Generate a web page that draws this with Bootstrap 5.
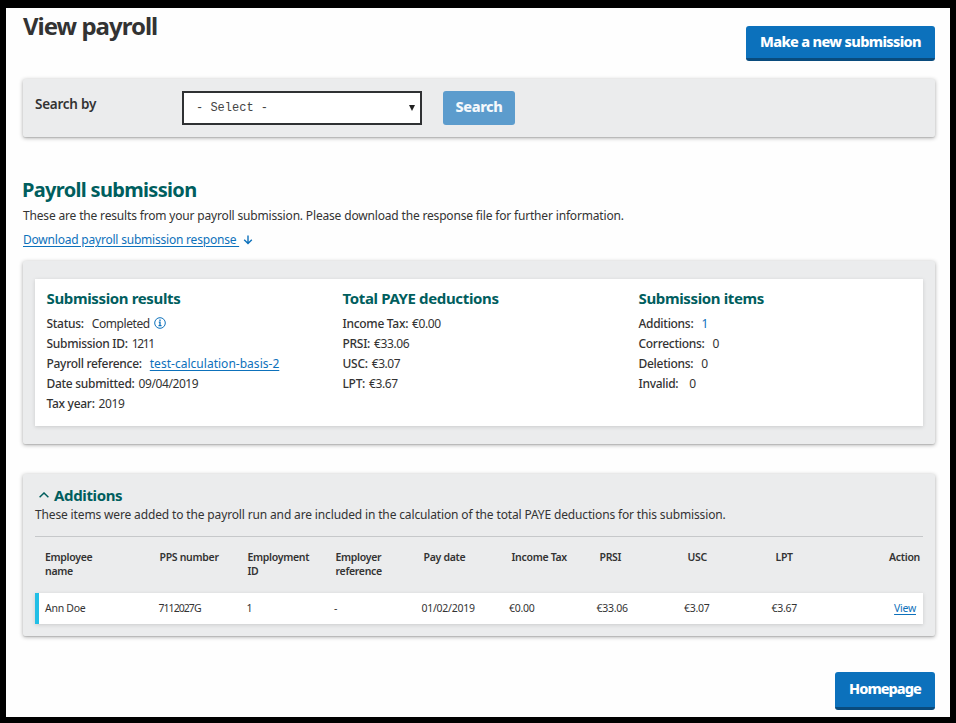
<!DOCTYPE html>
<html lang="en">
<head>
<meta charset="utf-8">
<meta name="viewport" content="width=device-width, initial-scale=1">
<title>View payroll</title>
<link rel="stylesheet" href="https://cdn.jsdelivr.net/npm/bootstrap@5.3.0/dist/css/bootstrap.min.css">
<style>
:root { --ink: #333; --teal: #005e5e; --link: #0d71bb; --grey: #ebeced; }
body { font: 12px/20px "Noto Sans", "Open Sans", sans-serif; letter-spacing: -.17px; color: var(--ink); background: #000; }
.page { height: 723px; border: solid #000; border-width: 8px 6px 6px; padding: 0 15px 0 17px; background: #fefefe; overflow: hidden; }
.page > * { flex: none; }
h1, h2, h3, p { margin: 0; }
h1 { font-size: 24px; line-height: 30px; font-weight: 700; letter-spacing: -1px; padding-top: 3px; }
h2 { font-size: 20px; line-height: 24px; font-weight: 700; letter-spacing: -.68px; color: var(--teal); margin: 41px 0 0 -1px; }
h3 { font-size: 15px; line-height: 22px; font-weight: 700; letter-spacing: -.36px; color: var(--teal); }
a { color: var(--link); text-underline-offset: 2px; }
.topline { height: 71px; }
.action-btn { --bs-btn-font-size: 14.5px; --bs-btn-font-weight: 800; --bs-btn-line-height: 30px; --bs-btn-padding-x: 0; --bs-btn-padding-y: 0;
  --bs-btn-bg: #0c71bc; --bs-btn-color: #fff; --bs-btn-border-width: 0; --bs-btn-border-radius: 3px; --bs-btn-hover-bg: #095e9e; --bs-btn-hover-color: #fff;
  letter-spacing: -.66px; padding-bottom: 2px; border-bottom: 3px solid #094b7d; white-space: nowrap; }
.btn-new { width: 189px; margin-top: 18px; }
.btn-home { width: 100px; --bs-btn-line-height: 32px; padding-bottom: 3px; letter-spacing: -.95px; }
.btn-find { width: 72px; height: 34px; --bs-btn-line-height: 28px; border: 0; padding-bottom: 5px; letter-spacing: -.4px; }
.btn-find:disabled { background: #5c9ccd; color: #f4f8fb; opacity: 1; }
.panel { background: var(--grey); border-radius: 2px; box-shadow: 0 1px 4px rgba(0,0,0,.33), 0 1px 1px rgba(0,0,0,.1); padding: 0 12px; }
.search-panel { height: 58px; padding-top: 12px; }
.search-label { width: 147px; font-size: 13.5px; line-height: 27px; font-weight: 600; letter-spacing: -.25px; }
.search-select { width: 240px; height: 34px; border: 2px solid #2f3133; border-radius: 0; padding: 0 0 0 12px; margin-right: 21px; color: #444;
  font: 12px/30px "Liberation Mono", monospace; letter-spacing: 0;
  background: #fff url("data:image/svg+xml,%3Csvg xmlns='http://www.w3.org/2000/svg' viewBox='0 0 6 6'%3E%3Cpath d='M0 0h6L3 6z' fill='%23222'/%3E%3C/svg%3E") no-repeat right 5px center / 6px 6px; }
.intro { margin-top: 4px; }
.download { gap: 4px; margin-top: 4px; letter-spacing: -.21px; }
.results { height: 183px; margin-top: 11px; padding-top: 18px; }
.sheet { background: #fff; box-shadow: 0 1px 4px rgba(0,0,0,.14); }
.summary { height: 147px; padding: 8px 0 0 11.5px; }
.summary-col { width: 296px; flex: none; }
.summary-col h3 { margin-bottom: 5px; }
.summary-col dl { margin: 0; }
.summary-col dt, .summary-col dd { line-height: 20px; margin: 0; white-space: nowrap; letter-spacing: -.42px; }
.summary-col dt { font-weight: 500; letter-spacing: -.29px; margin-right: 4px; }
.summary-col dt.wide { margin-right: 8px; }
.summary-col dt.wider { margin-right: 11px; }
.summary-col .tight { letter-spacing: -1.4px; }
.summary-col .ref-link { letter-spacing: .02px; }
.info { margin: 3px 0 0 4px; }
.linkish { color: var(--link); }
.additions { height: 162px; margin-top: 30px; padding-top: 11px; }
.additions h3 { line-height: 20px; gap: 5px; padding-left: 4px; }
.note { line-height: 18px; letter-spacing: -.145px; padding-top: 1px; }
.panel hr { margin: 12px 0 0; border-color: #c6c8ca; opacity: 1; }
.pay-grid { display: grid; }
.pay-head { grid-template-columns: 114.5px repeat(6, 88px) 88px 1fr; font-size: 10.5px; line-height: 14px; font-weight: 600; letter-spacing: -.3px; padding: 13px 3px 15px 10px; }
.pay-row { grid-template-columns: 113.5px 88px repeat(6, 87.5px) 1fr; font-size: 10.5px; line-height: 31px; letter-spacing: -.27px; padding: 0 7px 0 6px; border-left: 4px solid #22bfe6; }
.pps { letter-spacing: -.95px; }
.pay-foot { margin-top: 36px; }
</style>
</head>
<body>
<main class="page d-flex flex-column">
  <header class="topline d-flex justify-content-between align-items-start">
    <h1>View payroll</h1>
    <button class="btn action-btn btn-new" type="button">Make a new submission</button>
  </header>

  <form class="panel search-panel d-flex align-items-start">
    <label class="search-label" for="by">Search by</label>
    <select class="form-select search-select" id="by"><option>- Select -</option></select>
    <button class="btn action-btn btn-find" type="button" disabled>Search</button>
  </form>

  <h2>Payroll submission</h2>
  <p class="intro">These are the results from your payroll submission. Please download the response file for further information.</p>
  <p class="download d-flex align-items-center"><a href="#">Download payroll submission response&nbsp;</a>
    <svg width="10" height="10" viewBox="0 0 10 10" fill="none" stroke="#0d71bb" stroke-width="1.4"><path d="M5 .5v8M1.2 4.8 5 8.6l3.8-3.8"/></svg></p>

  <section class="panel results">
    <div class="sheet summary d-flex">
      <div class="summary-col">
        <h3>Submission results</h3>
        <dl>
          <div class="d-flex"><dt class="wide">Status:</dt><dd>Completed</dd>
            <svg class="info" width="12" height="12" viewBox="0 0 12 12" fill="none" stroke="#0d71bb"><circle cx="6" cy="6" r="5.3"/><path stroke-width="1.3" d="M4.8 5.2H6v3.5M4.5 8.7h3M6 2.5v1.4"/></svg></div>
          <div class="d-flex"><dt>Submission ID:</dt><dd class="tight">1211</dd></div>
          <div class="d-flex"><dt class="wide">Payroll reference:</dt><dd><a class="ref-link" href="#">test-calculation-basis-2</a></dd></div>
          <div class="d-flex"><dt>Date submitted:</dt><dd>09/04/2019</dd></div>
          <div class="d-flex"><dt>Tax year:</dt><dd>2019</dd></div>
        </dl>
      </div>
      <div class="summary-col">
        <h3>Total PAYE deductions</h3>
        <dl>
          <div class="d-flex"><dt>Income Tax:</dt><dd>€0.00</dd></div>
          <div class="d-flex"><dt>PRSI:</dt><dd>€33.06</dd></div>
          <div class="d-flex"><dt>USC:</dt><dd>€3.07</dd></div>
          <div class="d-flex"><dt>LPT:</dt><dd>€3.67</dd></div>
        </dl>
      </div>
      <div class="summary-col">
        <h3>Submission items</h3>
        <dl>
          <div class="d-flex"><dt class="wide">Additions:</dt><dd class="linkish">1</dd></div>
          <div class="d-flex"><dt class="wide">Corrections:</dt><dd>0</dd></div>
          <div class="d-flex"><dt class="wide">Deletions:</dt><dd>0</dd></div>
          <div class="d-flex"><dt class="wider">Invalid:</dt><dd>0</dd></div>
        </dl>
      </div>
    </div>
  </section>

  <section class="panel additions">
    <h3 class="d-flex align-items-center"><svg width="10" height="6" viewBox="0 0 10 6" fill="none" stroke="#005e5e" stroke-width="1.5"><path d="M.6 5.2 5 1l4.4 4.2"/></svg>Additions</h3>
    <p class="note">These items were added to the payroll run and are included in the calculation of the total PAYE deductions for this submission.</p>
    <hr>
    <div class="pay-grid pay-head">
      <div>Employee<br>name</div><div>PPS number</div><div>Employment<br>ID</div><div>Employer<br>reference</div><div>Pay date</div><div>Income Tax</div><div>PRSI</div><div>USC</div><div class="d-flex justify-content-between"><span>LPT</span><span>Action</span></div>
    </div>
    <div class="sheet pay-grid pay-row">
      <div>Ann Doe</div><div class="pps">7112027G</div><div>1</div><div>-</div><div>01/02/2019</div><div>€0.00</div><div>€33.06</div><div>€3.07</div><div class="d-flex justify-content-between"><span>€3.67</span><a href="#">View</a></div>
    </div>
  </section>

  <footer class="pay-foot d-flex justify-content-end"><button class="btn action-btn btn-home" type="button">Homepage</button></footer>
</main>
<script src="https://cdn.jsdelivr.net/npm/bootstrap@5.3.0/dist/js/bootstrap.bundle.min.js"></script>
</body>
</html>
